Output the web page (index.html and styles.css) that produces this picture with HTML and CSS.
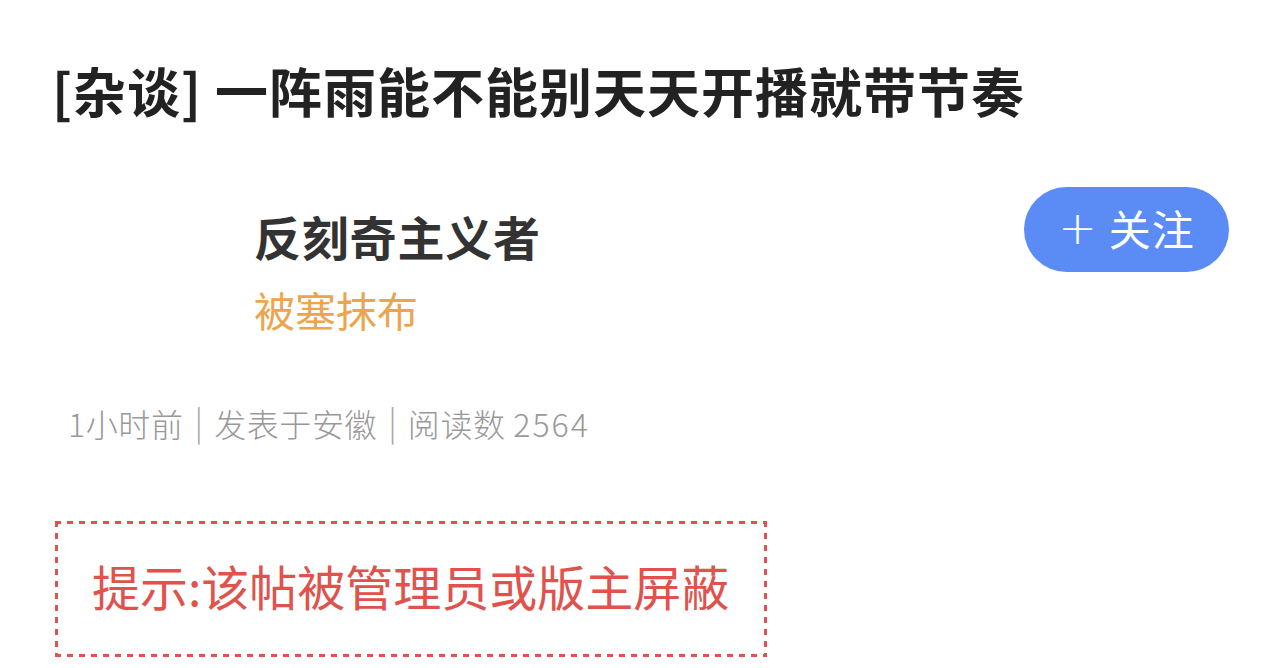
FILE: index.html
```html
<!DOCTYPE html>
<html lang="zh-CN">
<head>
<meta charset="utf-8">
<link rel="stylesheet" href="styles.css">
</head>
<body>
<div class="page">
  <h1 class="title">[杂谈] 一阵雨能不能别天天开播就带节奏</h1>
  <div class="author">
    <div class="avatar"></div>
    <div class="author-info">
      <div class="name">反刻奇主义者</div>
      <div class="tag">被塞抹布</div>
    </div>
    <button class="follow"><span class="plus">+</span><span class="follow-text">关注</span></button>
  </div>
  <div class="meta"><span>1小时前</span><span class="sep">|</span><span>发表于安徽</span><span class="sep">|</span><span>阅读数 <span class="num">2564</span></span></div>
  <div class="notice">提示:该帖被管理员或版主屏蔽</div>
</div>
</body>
</html>
```
FILE: styles.css
```css
html, body {
  margin: 0;
  padding: 0;
  background: #ffffff;
}
body {
  font-family: "Noto Sans CJK SC", "Noto Sans", sans-serif;
}
.page {
  padding: 0 55px 0 52px;
}
.title {
  margin: 0;
  padding-top: 55px;
  font-size: 53px;
  line-height: 70px;
  font-weight: 600;
  color: #222222;
  letter-spacing: 1px;
}
.author {
  display: flex;
  align-items: flex-start;
  margin-top: 62px;
}
.avatar {
  width: 202px;
  height: 140px;
  flex: none;
}
.author-info {
  flex: 1;
  padding-top: 17px;
}
.name {
  font-size: 47px;
  line-height: 64px;
  font-weight: 600;
  color: #333333;
  letter-spacing: 0.8px;
}
.tag {
  font-size: 41px;
  line-height: 56px;
  color: #EBA54F;
  margin-top: 13px;
}
.follow {
  flex: none;
  display: flex;
  align-items: center;
  justify-content: center;
  width: 205px;
  height: 85px;
  border: none;
  border-radius: 43px;
  background: #5B8CF5;
  color: #ffffff;
  font-family: inherit;
  font-size: 42px;
  padding: 0 0 4px 0;
  margin-top: 0;
}
.plus {
  font-family: "DejaVu Sans", sans-serif;
  font-weight: 200;
  font-size: 46px;
  margin-right: 12px;
  line-height: 1;
}
.follow-text {
  line-height: 1;
  letter-spacing: 1px;
}
.meta {
  display: flex;
  align-items: center;
  margin-top: 65px;
  padding-left: 16px;
  font-size: 32px;
  line-height: 42px;
  font-weight: 300;
  color: #999999;
  letter-spacing: 0.6px;
}
.num {
  letter-spacing: 2px;
}
.sep {
  font-size: 34px;
  line-height: 38px;
  padding-bottom: 4px;
  font-weight: 200;
  color: #aaaaaa;
  margin: 0 11px;
  letter-spacing: 0;
}
.notice {
  margin-top: 77px;
  width: 712px;
  height: 136px;
  box-sizing: border-box;
  display: flex;
  align-items: center;
  padding-left: 37px;
  padding-bottom: 8px;
  margin-left: 3px;
  font-size: 48px;
  color: #E0524C;
  background:
    repeating-linear-gradient(90deg, #E0524C 0 6px, transparent 6px 12px) top left / 100% 3px no-repeat,
    repeating-linear-gradient(90deg, #E0524C 0 6px, transparent 6px 12px) bottom left / 100% 3px no-repeat,
    repeating-linear-gradient(180deg, #E0524C 0 6px, transparent 6px 12px) top left / 3px 100% no-repeat,
    repeating-linear-gradient(180deg, #E0524C 0 6px, transparent 6px 12px) top right / 3px 100% no-repeat;
}
```
